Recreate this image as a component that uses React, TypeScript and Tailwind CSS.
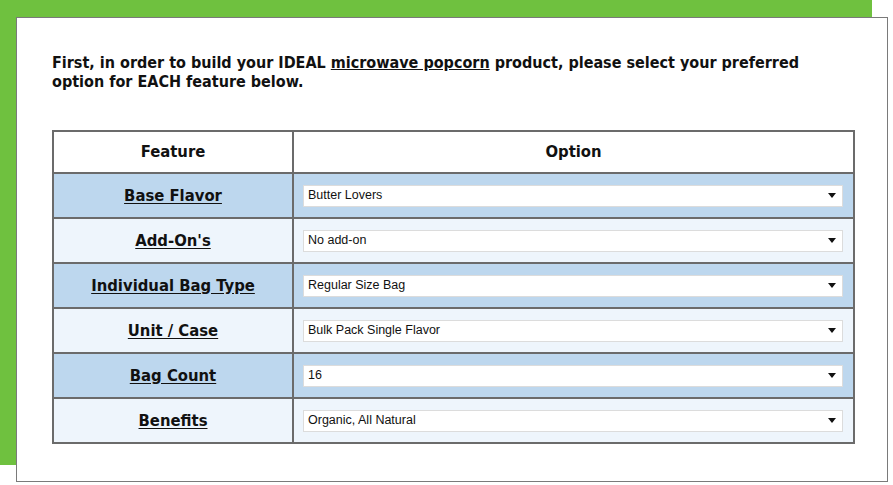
const rows = [
  { label: "Base Flavor", value: "Butter Lovers" },
  { label: "Add-On's", value: "No add-on" },
  { label: "Individual Bag Type", value: "Regular Size Bag" },
  { label: "Unit / Case", value: "Bulk Pack Single Flavor" },
  { label: "Bag Count", value: "16" },
  { label: "Benefits", value: "Organic, All Natural" },
];

function Arrow() {
  return (
    <svg width="8" height="5" viewBox="0 0 8 5" className="shrink-0">
      <path d="M0 0 H8 L4 5 Z" fill="#111" />
    </svg>
  );
}

export default function App() {
  const label = { fontFamily: '"DejaVu Sans Condensed", "DejaVu Sans", sans-serif' };
  const narrow = { fontFamily: '"Liberation Sans", Arial, sans-serif' };
  return (
    <div className="w-[893px] h-[485px] bg-white pl-[16px] pt-[17px]">
      <div className="w-[872px] h-[465px] bg-white border border-[#7a7a7a] shadow-[-16px_-17px_0_#6fc13f] pl-[35px] pt-[35px]">
        <p className="text-[16px] leading-[19px] font-bold text-[#111] w-[780px]" style={label}>
          First, in order to build your IDEAL <span className="underline">microwave popcorn</span> product, please select your preferred option for EACH feature below.
        </p>
        <table className="mt-[39px] w-[803px] border-collapse border-2 border-[#6b6b6b]">
          <thead>
            <tr className="h-[42px] bg-white">
              <th className="w-[240px] border-2 border-[#6b6b6b] text-[16.5px] font-bold text-[#111]" style={label}>Feature</th>
              <th className="border-2 border-[#6b6b6b] text-[16.5px] font-bold text-[#111]" style={label}>Option</th>
            </tr>
          </thead>
          <tbody>
            {rows.map((r, i) => (
              <tr key={r.label} className={`h-[45px] ${i % 2 === 0 ? "bg-[#bdd7ee]" : "bg-[#eef5fc]"}`}>
                <td className="border-2 border-[#6b6b6b] text-center">
                  <span className="text-[16.5px] font-bold text-[#111] underline underline-offset-2" style={label}>{r.label}</span>
                </td>
                <td className="border-2 border-[#6b6b6b] pl-[9px] pr-[10px]">
                  <div className="h-[22px] bg-white border border-[#dcdcdc] flex items-center justify-between pl-[4px] pr-[6px]">
                    <span className="text-[12.5px] text-[#111]" style={narrow}>{r.value}</span>
                    <Arrow />
                  </div>
                </td>
              </tr>
            ))}
          </tbody>
        </table>
      </div>
    </div>
  );
}
